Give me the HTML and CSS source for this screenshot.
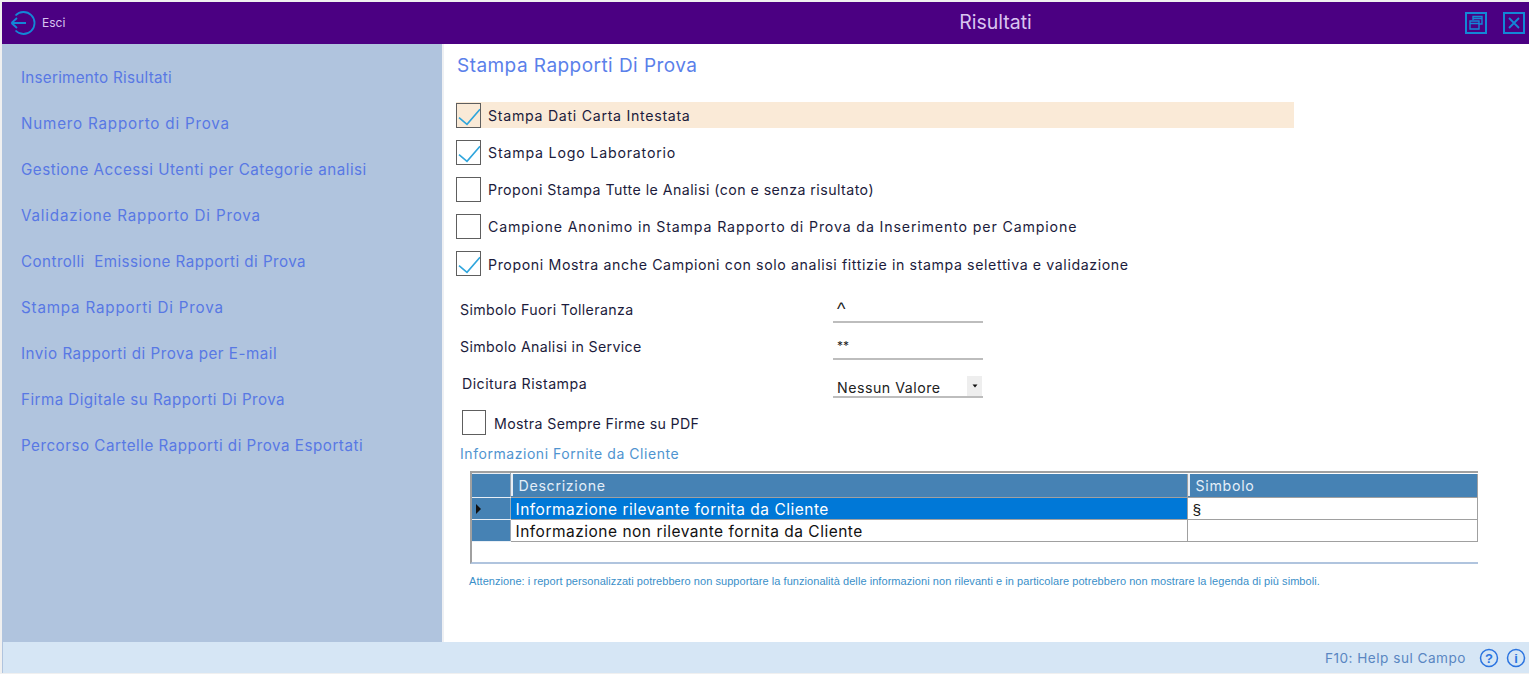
FILE: index.html
```html
<!DOCTYPE html>
<html lang="it">
<head>
<meta charset="utf-8">
<title>Risultati</title>
<link rel="stylesheet" href="styles.css">
</head>
<body>
<div class="app">
  <header class="topbar">
    <div class="exit">
      <svg class="exit-icon" viewBox="0 0 26 26" width="26" height="26"><path d="M5.500 5.500A11 11 0 1 1 5.500 20.500" fill="none" stroke="#1387d6" stroke-width="1.800"/><path d="M1.500 13H16M1.500 13L7 8M1.500 13L7 18" fill="none" stroke="#1387d6" stroke-width="1.800"/></svg>
      <span class="exit-label">Esci</span>
    </div>
    <h1 class="app-title">Risultati</h1>
    <div class="win-buttons">
      <svg viewBox="0 0 22 22" width="22" height="22"><rect x="1" y="1" width="20" height="20" fill="none" stroke="#1387d6" stroke-width="2"/><path d="M8 8V4.500H17V12H14.500M5 9H14V17H5ZM5 11.500H14M8 6.500H17" fill="none" stroke="#1387d6" stroke-width="1.400"/></svg>
      <svg viewBox="0 0 22 22" width="22" height="22"><rect x="1" y="1" width="20" height="20" fill="none" stroke="#1387d6" stroke-width="2"/><path d="M6 6L16 16M16 6L6 16" fill="none" stroke="#1387d6" stroke-width="1.800"/></svg>
    </div>
  </header>
  <div class="middle">
    <nav class="sidebar">
      <a class="nav-item tight">Inserimento Risultati</a>
      <a class="nav-item wide">Numero Rapporto di Prova</a>
      <a class="nav-item">Gestione Accessi Utenti per Categorie analisi</a>
      <a class="nav-item wide">Validazione Rapporto Di Prova</a>
      <a class="nav-item snug">Controlli&nbsp; Emissione Rapporti di Prova</a>
      <a class="nav-item wide">Stampa Rapporti Di Prova</a>
      <a class="nav-item">Invio Rapporti di Prova per E-mail</a>
      <a class="nav-item snug">Firma Digitale su Rapporti Di Prova</a>
      <a class="nav-item">Percorso Cartelle Rapporti di Prova Esportati</a>
    </nav>
    <main class="content">
      <h2 class="section-title">Stampa Rapporti Di Prova</h2>
      <div class="check-row highlighted">
        <span class="box"><svg viewBox="0 0 23 23" width="23" height="23"><path d="M2 13.700L10 20.300L23 5.300" fill="none" stroke="#2fa5dc" stroke-width="1.600"/></svg></span>
        <span class="check-text sp-70">Stampa Dati Carta Intestata</span>
      </div>
      <div class="check-row">
        <span class="box"><svg viewBox="0 0 23 23" width="23" height="23"><path d="M2 13.700L10 20.300L23 5.300" fill="none" stroke="#2fa5dc" stroke-width="1.600"/></svg></span>
        <span class="check-text sp-80">Stampa Logo Laboratorio</span>
      </div>
      <div class="check-row">
        <span class="box"></span>
        <span class="check-text sp-45">Proponi Stampa Tutte le Analisi (con e senza risultato)</span>
      </div>
      <div class="check-row">
        <span class="box"></span>
        <span class="check-text sp-85">Campione Anonimo in Stampa Rapporto di Prova da Inserimento per Campione</span>
      </div>
      <div class="check-row last">
        <span class="box"><svg viewBox="0 0 23 23" width="23" height="23"><path d="M2 13.700L10 20.300L23 5.300" fill="none" stroke="#2fa5dc" stroke-width="1.600"/></svg></span>
        <span class="check-text sp-60">Proponi Mostra anche Campioni con solo analisi fittizie in stampa selettiva e validazione</span>
      </div>
      <div class="field-row first">
        <span class="field-label">Simbolo Fuori Tolleranza</span>
        <span class="field-value caret">^</span>
      </div>
      <div class="field-row">
        <span class="field-label">Simbolo Analisi in Service</span>
        <span class="field-value stars">**</span>
      </div>
      <div class="field-row select-row">
        <span class="field-label">Dicitura Ristampa</span>
        <span class="field-value select">Nessun Valore<span class="select-btn"><svg viewBox="0 0 6 4" width="6" height="4"><path d="M0.500 0.500H5.500L3 3.500Z" fill="#111"/></svg></span></span>
      </div>
      <div class="check-row pdf-row">
        <span class="box small"></span>
        <span class="check-text">Mostra Sempre Firme su PDF</span>
      </div>
      <div class="info-label">Informazioni Fornite da Cliente</div>
      <div class="grid-wrap">
        <table class="grid">
          <colgroup><col class="col-head"><col class="col-desc"><col></colgroup>
          <thead>
            <tr><th class="row-head"></th><th><span class="th-text">Descrizione</span></th><th><span class="th-text">Simbolo</span></th></tr>
          </thead>
          <tbody>
            <tr class="selected"><td class="row-head"><svg viewBox="0 0 5 10" width="5" height="10"><path d="M0 0L5 5L0 10Z" fill="#111"/></svg></td><td class="desc">Informazione rilevante fornita da Cliente</td><td class="sym">§</td></tr>
            <tr><td class="row-head"></td><td class="desc">Informazione non rilevante fornita da Cliente</td><td class="sym"></td></tr>
          </tbody>
        </table>
      </div>
      <p class="note">Attenzione: i report personalizzati potrebbero non supportare la funzionalità delle informazioni non rilevanti e in particolare potrebbero non mostrare la legenda di più simboli.</p>
    </main>
  </div>
  <footer class="statusbar">
    <span class="help-text">F10: Help sul Campo</span>
    <svg viewBox="0 0 20 20" width="20" height="20"><circle cx="10" cy="10" r="8.500" fill="none" stroke="#2b74e0" stroke-width="1.500"/><text x="10" y="14.500" text-anchor="middle" class="svg-glyph">?</text></svg>
    <svg viewBox="0 0 20 20" width="20" height="20"><circle cx="10" cy="10" r="8.500" fill="none" stroke="#2b74e0" stroke-width="1.500"/><text x="10" y="14.500" text-anchor="middle" class="svg-glyph">i</text></svg>
  </footer>
</div>
</body>
</html>
```
FILE: styles.css
```css
* { box-sizing: border-box; }
html, body { margin: 0; padding: 0; height: 100%; overflow: hidden; }
body { background: #f0f0f0; font-family: Inter, "Liberation Sans", sans-serif; color: #1c1c3c; }
.app { height: 674px; padding: 2px 0 0 2px; display: flex; flex-direction: column; }

.topbar { height: 42px; flex: none; background: #4b0082; display: flex; align-items: center; position: relative; padding: 0 4px 0 8px; }
.exit { display: flex; align-items: center; gap: 5px; }
.exit-label { font-size: 12px; color: #d9c4f0; margin-left: 1px; margin-top: -2px; }
.app-title { position: absolute; left: 460px; right: 0; top: 8px; text-align: center; margin: 0; font-size: 19.500px; line-height: 24px; font-weight: 400; color: #d9c4f0; }
.win-buttons { margin-left: auto; display: flex; gap: 16px; align-items: center; }

.middle { flex: 1; display: flex; min-height: 0; }
.sidebar { width: 442px; flex: none; background: #b0c4de; border-right: 2px solid #eef0f3; padding: 10px 0 0 19px; display: flex; flex-direction: column; }
.nav-item { height: 46px; display: flex; align-items: center; font-size: 15.200px; letter-spacing: 0.5px; color: #5878e4; white-space: pre; }
.nav-item.tight { letter-spacing: 0.26px; }
.nav-item.snug { letter-spacing: 0.44px; }
.nav-item.wide { letter-spacing: 0.8px; }

.content { flex: 1; background: #fff; padding: 0 0 0 12px; }
.section-title { height: 58px; margin: 0; font-size: 19px; letter-spacing: 0.45px; font-weight: 400; color: #5a80ea; line-height: 44px; padding-left: 1px; }

.check-row { display: flex; align-items: center; height: 26px; margin-bottom: 11px; width: 838px; }
.check-row.last { margin-top: 1px; margin-bottom: 0; width: auto; }
.highlighted { background: #faead7; }
.box { width: 25px; height: 25px; border: 1px solid #5e5e5e; flex: none; display: flex; }
.check-text { margin-left: 7px; font-size: 14.200px; letter-spacing: 0.65px; white-space: nowrap; color: #1c1c3c; }
.check-text.sp-45 { letter-spacing: 0.45px; }
.check-text.sp-60 { letter-spacing: 0.6px; }
.check-text.sp-70 { letter-spacing: 0.7px; }
.check-text.sp-80 { letter-spacing: 0.8px; }
.check-text.sp-85 { letter-spacing: 0.85px; }
.last .check-text { position: relative; top: 1px; }

.field-row { display: grid; grid-template-columns: 377px 150px; height: 37px; align-items: center; }
.field-row.first { margin-top: 10px; }
.field-label { font-size: 14.200px; letter-spacing: 0.35px; padding-left: 4px; position: relative; top: 5px; }
.field-value { height: 37px; display: flex; align-items: center; border-bottom: 2px solid #bdbdbd; padding: 10px 0 0 4px; font-size: 14.200px; color: #222; }
.caret { font-family: "Liberation Sans", sans-serif; font-size: 18px; padding-top: 12px; }
.stars { font-size: 12px; }
.select-row { height: 38px; }
.select-row .field-label { padding-left: 6px; top: 4px; letter-spacing: 0.45px; }
.select { height: 38px; padding-top: 18px; letter-spacing: 0.5px; position: relative; }
.select-btn { position: absolute; right: 1px; top: 16px; width: 15px; height: 20px; background: #eee; display: flex; align-items: center; justify-content: center; }

.pdf-row { height: 26px; margin: 11px 0 0 6px; width: auto; }
.box.small { width: 24px; }
.pdf-row .check-text { margin-left: 8px; letter-spacing: 0.35px; position: relative; top: 1px; }
.info-label { font-size: 14px; letter-spacing: 0.55px; color: #4f94d0; padding-left: 4px; height: 21px; line-height: 21px; margin-top: 8px; }

.grid-wrap { margin: 7px 0 0 14px; width: 1008px; height: 93px; border-top: 2px solid #a0a0a0; border-left: 2px solid #a0a0a0; border-bottom: 2px solid #b0c4de; background: #fff; }
.grid { border-collapse: collapse; table-layout: fixed; width: 1006px; }
.col-head { width: 38px; }
.col-desc { width: 677px; }
.grid th { height: 24px; padding: 0; background: #4682b4; color: #e4eef8; font-weight: 400; font-size: 14.200px; letter-spacing: 0.7px; text-align: left; border-right: 1px solid #a0a0a0; border-bottom: 1px solid #a0a0a0; }
.th-text { display: block; height: 22px; line-height: 24px; padding-left: 6px; border-left: 2px solid #e8eef5; }
.grid td { height: 22px; padding: 2px 0 0 5px; font-size: 15.500px; letter-spacing: 0.5px; color: #111; border-right: 1px solid #a0a0a0; border-bottom: 1px solid #a0a0a0; white-space: nowrap; line-height: 19px; }
.grid .row-head { background: #4682b4; padding: 0 0 0 4px; border-top: 1px solid #e8eef5; border-right: 1px solid #9aa8b5; border-bottom: 1px solid #e8eef5; vertical-align: middle; }
.row-head svg { display: block; }
.selected .desc { background: #0078d7; color: #fff; }
.sym { font-family: "Liberation Sans", sans-serif; }

.note { margin: 10px 0 0 13px; font-family: "Liberation Sans", sans-serif; font-size: 11px; letter-spacing: 0.06px; color: #3a8fc9; white-space: nowrap; line-height: 14px; }

.statusbar { height: 31px; flex: none; margin-bottom: 1px; background: #d6e6f5; border-left: 1px solid #b0c4de; display: flex; align-items: center; justify-content: flex-end; gap: 7px; padding-right: 3px; }
.help-text { font-size: 13.600px; letter-spacing: 0.5px; color: #5a86c2; margin-right: 6px; }
.svg-glyph { font-family: "Liberation Sans", sans-serif; font-size: 13px; font-weight: 700; fill: #2b74e0; }
```
